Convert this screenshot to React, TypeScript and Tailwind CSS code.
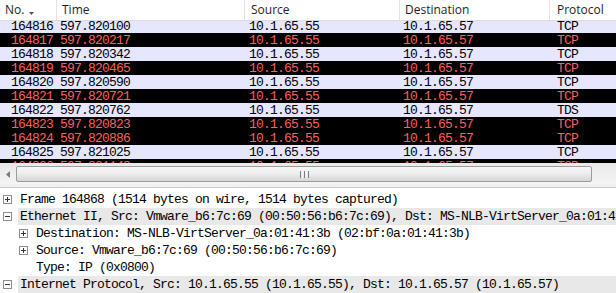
import React from 'react'

type Packet = { no: string; time: string; proto: string; bad: boolean }

const packets: Packet[] = [
  { no: '164816', time: '597.820100', proto: 'TCP', bad: false },
  { no: '164817', time: '597.820217', proto: 'TCP', bad: true },
  { no: '164818', time: '597.820342', proto: 'TCP', bad: false },
  { no: '164819', time: '597.820465', proto: 'TCP', bad: true },
  { no: '164820', time: '597.820590', proto: 'TCP', bad: false },
  { no: '164821', time: '597.820721', proto: 'TCP', bad: true },
  { no: '164822', time: '597.820762', proto: 'TDS', bad: false },
  { no: '164823', time: '597.820823', proto: 'TCP', bad: true },
  { no: '164824', time: '597.820886', proto: 'TCP', bad: true },
  { no: '164825', time: '597.821025', proto: 'TCP', bad: false },
  { no: '164826', time: '597.821148', proto: 'TCP', bad: true },
]

const mono = "font-['Liberation_Mono',monospace] text-[13px] tracking-[-0.8px]"

function PacketRow({ p }: { p: Packet }) {
  return (
    <div className={`flex h-[14px] shrink-0 items-center whitespace-pre leading-none ${p.bad ? 'bg-black text-[#ff5f5f]' : 'bg-[#e6e6ff] text-black'}`}>
      <span className="w-[53px] text-right">{p.no}</span>
      <span className="w-[196px] pl-[7px]">{p.time}</span>
      <span className="w-[154px]">10.1.65.55</span>
      <span className="w-[154px]">10.1.65.57</span>
      <span>{p.proto}</span>
    </div>
  )
}

function Expander({ open }: { open: boolean }) {
  return (
    <svg width="9" height="9" viewBox="0 0 9 9" className="shrink-0">
      <rect x="0.5" y="0.5" width="8" height="8" fill="#fff" stroke="#8f8f8f" />
      <path d="M2 4.5h5" stroke="#333" />
      {!open && <path d="M4.5 2v5" stroke="#333" />}
    </svg>
  )
}

type Detail = { text: string; level: 0 | 1; expander?: 'open' | 'closed'; hl?: boolean }

const details: Detail[] = [
  { text: 'Frame 164868 (1514 bytes on wire, 1514 bytes captured)', level: 0, expander: 'closed' },
  { text: 'Ethernet II, Src: Vmware_b6:7c:69 (00:50:56:b6:7c:69), Dst: MS-NLB-VirtServer_0a:01:41:3b (02:bf:0a:01:41:3b)', level: 0, expander: 'open', hl: true },
  { text: 'Destination: MS-NLB-VirtServer_0a:01:41:3b (02:bf:0a:01:41:3b)', level: 1, expander: 'closed' },
  { text: 'Source: Vmware_b6:7c:69 (00:50:56:b6:7c:69)', level: 1, expander: 'closed' },
  { text: 'Type: IP (0x0800)', level: 1 },
  { text: 'Internet Protocol, Src: 10.1.65.55 (10.1.65.55), Dst: 10.1.65.57 (10.1.65.57)', level: 0, expander: 'open', hl: true },
]

function DetailRow({ d }: { d: Detail }) {
  return (
    <div className={`flex h-[17px] shrink-0 items-center whitespace-pre ${d.level === 1 ? 'pl-[19px]' : 'pl-[3px]'}`}>
      {d.expander ? (
        <div className="flex w-[15px] shrink-0 items-center">
          <Expander open={d.expander === 'open'} />
        </div>
      ) : (
        <div className="w-[15px] shrink-0" />
      )}
      <div className={`flex h-full flex-1 items-center pl-[2px] ${d.hl ? 'bg-[#e8e8e8]' : ''}`}>{d.text}</div>
    </div>
  )
}

export default function App() {
  return (
    <div className="flex h-[293px] w-[616px] flex-col overflow-hidden bg-[#f0f0f0]">
      {/* packet list */}
      <div className="flex h-[21px] shrink-0 border-b border-[#dcdcdc] bg-white font-['Open_Sans',sans-serif] text-[12px] text-[#1e1e1e]">
        <div className="flex w-[57px] items-center gap-[5px] border-r border-[#e2e2e2] pl-[5px]">
          <span>No.</span>
          <svg width="5" height="3" viewBox="0 0 5 3" className="mt-[6px]">
            <path d="M0 0h5L2.5 3z" fill="#555" />
          </svg>
        </div>
        <div className="flex w-[188px] items-center border-r border-[#e2e2e2] pl-[5px]">Time</div>
        <div className="flex w-[155px] items-center border-r border-[#e2e2e2] pl-[6px]">Source</div>
        <div className="flex w-[150px] items-center border-r border-[#e2e2e2] pl-[5px]">Destination</div>
        <div className="flex flex-1 items-center pl-[7px]">Protocol</div>
      </div>
      <div className={`flex h-[142px] shrink-0 flex-col overflow-hidden bg-white ${mono}`}>
        <div className="-mt-[2px] flex flex-col">
          {packets.map((p) => (
            <PacketRow key={p.no} p={p} />
          ))}
        </div>
      </div>

      {/* horizontal scrollbar */}
      <div className="flex h-[21px] shrink-0 items-center bg-gradient-to-b from-[#e9e9e9] to-[#f4f4f4] pt-[1px]">
        <div className="flex w-[16px] justify-center">
          <svg width="4" height="7" viewBox="0 0 4 7">
            <path d="M4 0v7L0 3.5z" fill="#7a7a7a" />
          </svg>
        </div>
        <div className="flex h-[16px] w-[576px] items-center justify-center rounded-[2px] border border-[#9c9c9c] bg-gradient-to-b from-[#f7f7f7] via-[#ececec] to-[#d6d6d6]">
          <div className="flex gap-[1px]">
            <div className="h-[7px] w-[1px] bg-[#7e7e7e]" />
            <div className="h-[7px] w-[1px] bg-[#f8f8f8]" />
            <div className="h-[7px] w-[1px] bg-[#7e7e7e]" />
            <div className="h-[7px] w-[1px] bg-[#f8f8f8]" />
            <div className="h-[7px] w-[1px] bg-[#7e7e7e]" />
          </div>
        </div>
      </div>

      {/* splitter */}
      <div className="h-[4px] shrink-0 border-b border-[#c9c9c9] bg-[#f0f0f0]" />

      {/* packet details */}
      <div className={`flex flex-1 flex-col overflow-hidden bg-white pt-[3px] text-black ${mono}`}>
        {details.map((d) => (
          <DetailRow key={d.text} d={d} />
        ))}
      </div>
    </div>
  )
}
